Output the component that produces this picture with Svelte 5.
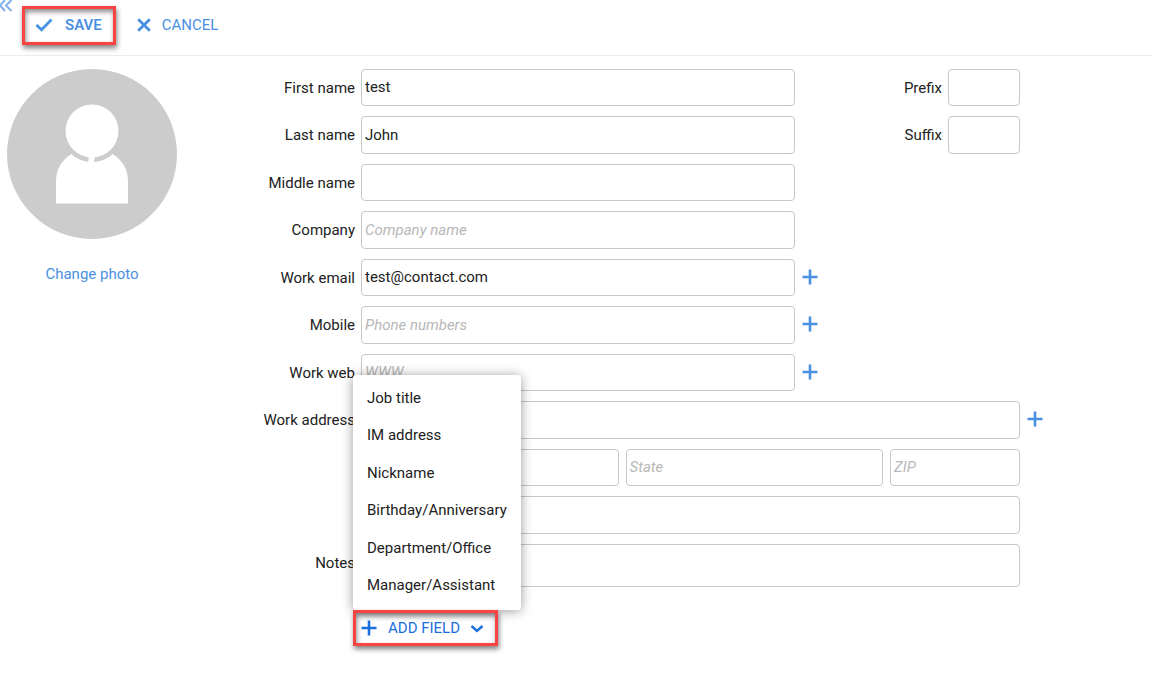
<script>
  // wide: the field reaches the right edge of the form
  let rows = $state([
    { id: 'first', label: 'First name', value: 'test', side: 'Prefix' },
    { id: 'last', label: 'Last name', value: 'John', side: 'Suffix' },
    { id: 'middle', label: 'Middle name', value: '' },
    { id: 'company', label: 'Company', value: '', placeholder: 'Company name' },
    { id: 'email', label: 'Work email', value: 'test@contact.com', add: true },
    { id: 'mobile', label: 'Mobile', value: '', placeholder: 'Phone numbers', add: true },
    { id: 'web', label: 'Work web', value: '', placeholder: 'WWW', add: true },
    { id: 'street', label: 'Work address', value: '', placeholder: 'Street', wide: true, add: true },
    { id: 'city', label: '', wide: true, split: true },
    { id: 'country', label: '', value: '', placeholder: '', wide: true, aria: 'Country' }
  ]);

  const extraFields = [
    'Job title',
    'IM address',
    'Nickname',
    'Birthday/Anniversary',
    'Department/Office',
    'Manager/Assistant'
  ];

  let menuOpen = $state(true);
</script>

{#snippet plus()}
  <svg width="16" height="16" viewBox="0 0 16 16" aria-hidden="true">
    <path d="M8 .5v15M.5 8h15" fill="none" stroke="currentColor" stroke-width="2.6" />
  </svg>
{/snippet}

<header class="toolbar">
  <button class="collapse" type="button" aria-label="Collapse">
    <svg width="12" height="12" viewBox="0 0 12 12">
      <path d="M5 0L0 5.500L5 11M11.500 0L6 5.500L11.500 11" fill="none" stroke="#7fb0ea" stroke-width="2" />
    </svg>
  </button>
  <button class="action save marked" type="button">
    <svg width="18" height="16" viewBox="0 0 18 16" aria-hidden="true">
      <path d="M1.500 8l5 4.700L16.500 2.500" fill="none" stroke="currentColor" stroke-width="2.800" />
    </svg>
    SAVE
  </button>
  <button class="action cancel" type="button">
    <svg width="14" height="14" viewBox="0 0 14 14" aria-hidden="true">
      <path d="M1.200 1.200l11.600 11.600M12.800 1.200L1.200 12.800" fill="none" stroke="currentColor" stroke-width="2.800" />
    </svg>
    CANCEL
  </button>
</header>

<main class="contact">
  <aside class="photo">
    <svg width="170" height="170" viewBox="0 0 170 170" role="img" aria-label="Contact photo">
      <circle cx="85" cy="85" r="85" fill="#ccc" />
      <path d="M49 134.500V113C49 99 55 91 65 84.500H105C115 91 121 99 121 113V134.500Z" fill="#fff" />
      <circle cx="85" cy="62" r="31" fill="#ccc" />
      <path d="M82 85h6.500l-2 10h-5.500z" fill="#fff" />
      <circle cx="85" cy="62" r="26.500" fill="#fff" />
    </svg>
    <a href="#photo">Change photo</a>
  </aside>

  <form class="form">
    {#each rows as row (row.id)}
      <div class="row">
        {#if row.label}
          <label class="name" for={row.id}>{row.label}</label>
        {:else}
          <span class="name"></span>
        {/if}
        {#if row.split}
          <div class="split">
            <input id="city" type="text" placeholder="City" aria-label="City" />
            <input type="text" placeholder="State" aria-label="State" />
            <input class="zip" type="text" placeholder="ZIP" aria-label="ZIP" />
          </div>
        {:else}
          <input id={row.id} type="text" placeholder={row.placeholder} aria-label={row.aria} bind:value={row.value} />
        {/if}
        <div class="tail" class:wide={row.wide}>
          {#if row.add}
            <button class="add" type="button" aria-label="Add {row.label}">{@render plus()}</button>
          {/if}
          {#if row.side}
            <label class="side" for={row.side}>{row.side}</label>
            <input class="short" id={row.side} type="text" />
          {/if}
        </div>
      </div>
    {/each}
    <div class="row notes">
      <label class="name" for="notes">Notes</label>
      <textarea id="notes" rows="1"></textarea>
      <div class="tail wide"></div>
    </div>

    <div class="add-field">
      {#if menuOpen}
        <ul class="menu">
          {#each extraFields as field}
            <li><button type="button">{field}</button></li>
          {/each}
        </ul>
      {/if}
      <button class="toggle marked" type="button" onclick={() => (menuOpen = !menuOpen)}>
        {@render plus()}
        <span>ADD FIELD</span>
        <svg width="14" height="10" viewBox="0 0 14 10" aria-hidden="true">
          <path d="M1.500 3l5.500 5l5.500-5" fill="none" stroke="currentColor" stroke-width="2.400" />
        </svg>
      </button>
    </div>
  </form>
</main>

<style>
  :global(body) {
    margin: 0;
    background: #fff;
    color: #212121;
    font: 15px/18px Roboto, sans-serif;
  }

  button,
  input,
  textarea {
    box-sizing: border-box;
    margin: 0;
    font: inherit;
    color: inherit;
  }

  button {
    padding: 0;
    border: 0;
    background: none;
    cursor: pointer;
  }

  svg {
    display: block;
    flex: none;
  }

  .toolbar {
    display: flex;
    align-items: flex-start;
    height: 55px;
    border-bottom: 1px solid #ececec;
    color: #4a90e2;
  }

  .collapse {
    width: 22px;
  }

  .action {
    display: flex;
    align-items: center;
    height: 39px;
    margin-top: 6px;
    padding-bottom: 2px;
  }

  .marked {
    border: 3px solid #fa4343;
    box-shadow: 1px 3px 5px rgba(0, 0, 0, 0.5), inset 1px 3px 5px rgba(0, 0, 0, 0.45);
  }

  .save {
    gap: 12px;
    padding: 0 11px 2px 10px;
    font-weight: 600;
  }

  .cancel {
    gap: 11px;
    margin-left: 21px;
  }

  .contact {
    display: flex;
    align-items: flex-start;
    padding: 13px 0 40px;
  }

  .photo {
    display: flex;
    flex: none;
    flex-direction: column;
    align-items: center;
    gap: 26px;
    width: 170px;
    margin-left: 7px;
  }

  .photo a {
    color: #4a90e2;
    text-decoration: none;
  }

  .form {
    flex: 1;
    min-width: 0;
  }

  .row {
    display: flex;
    align-items: center;
    height: 37px;
    margin-bottom: 10px;
  }

  .row:nth-child(even) {
    height: 38px;
  }

  .row.notes {
    height: 43px;
    margin-bottom: 23px;
  }

  .notes .name {
    padding-bottom: 5px;
  }

  .name {
    flex: none;
    width: 178px;
    margin-right: 6px;
    text-align: right;
  }

  input,
  textarea {
    flex: 1;
    min-width: 0;
    height: 100%;
    padding: 0 3px 1px;
    border: 1px solid #c8c8c8;
    border-radius: 4px;
    background: #fff;
    outline: none;
    resize: none;
  }

  ::placeholder {
    color: #b8b8b8;
    font-style: italic;
    opacity: 1;
  }

  .split {
    display: flex;
    flex: 1;
    gap: 7px;
    height: 100%;
    min-width: 0;
  }

  .zip {
    flex: none;
    width: 130px;
  }

  .tail {
    display: flex;
    flex: none;
    align-items: center;
    box-sizing: border-box;
    width: 358px;
    height: 100%;
    padding: 0 133px 0 7px;
  }

  .tail.wide {
    width: 133px;
    padding-right: 0;
  }

  .add {
    padding-bottom: 2px;
    color: #4a90e2;
  }

  .side {
    flex: 1;
    margin-right: 6px;
    text-align: right;
  }

  .short {
    flex: none;
    width: 72px;
  }

  .add-field {
    position: relative;
    width: 145px;
    margin-left: 176px;
  }

  .toggle {
    position: relative;
    display: flex;
    align-items: center;
    width: 100%;
    height: 36px;
    padding: 0 6px 0 5px;
    color: #1a6fdc;
  }

  .toggle span {
    margin: 0 10px 0 11px;
  }

  .menu {
    position: absolute;
    bottom: 100%;
    left: 0;
    box-sizing: border-box;
    width: 168px;
    margin: 0;
    padding: 4px 0 6px;
    border-radius: 3px;
    background: #fff;
    box-shadow: 0 1px 12px rgba(0, 0, 0, 0.4);
    list-style: none;
  }

  .menu button {
    display: block;
    width: 100%;
    height: 37px;
    padding: 0 14px;
    text-align: left;
    white-space: nowrap;
  }

  .menu li:nth-child(even) button {
    height: 38px;
  }

  .menu button:hover {
    background: #f2f2f2;
  }
</style>
